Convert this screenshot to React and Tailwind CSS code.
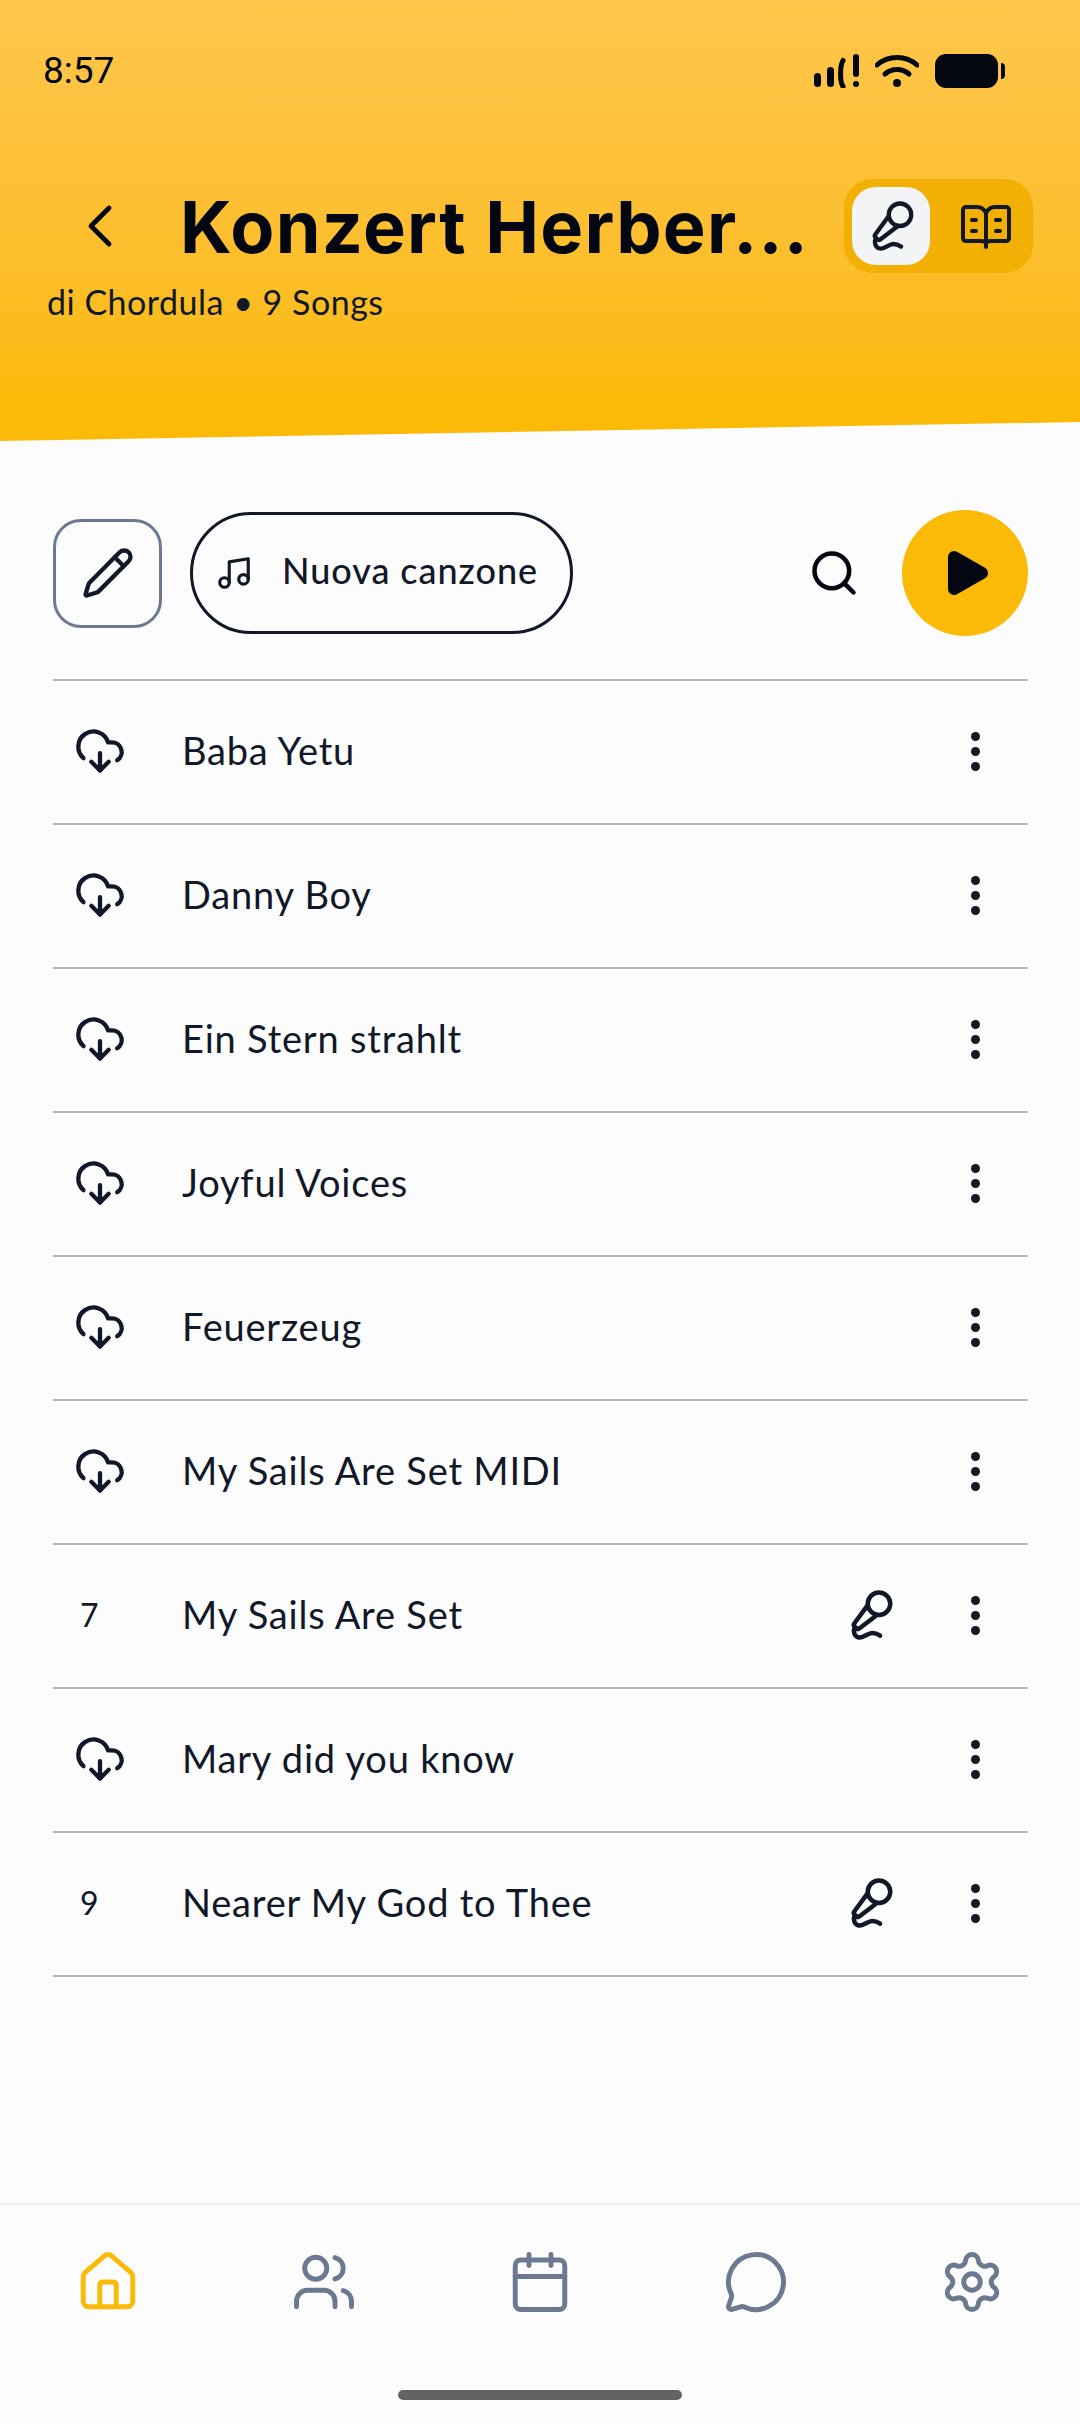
import { Calendar, ChevronLeft, CloudDownload, Home, MessageCircle, MicVocal, Music, Pencil, Search, Settings, Users } from 'lucide-react';

const songs = [
  { title: 'Baba Yetu' },
  { title: 'Danny Boy' },
  { title: 'Ein Stern strahlt' },
  { title: 'Joyful Voices' },
  { title: 'Feuerzeug' },
  { title: 'My Sails Are Set MIDI' },
  { title: 'My Sails Are Set', number: 7 },
  { title: 'Mary did you know' },
  { title: 'Nearer My God to Thee', number: 9 },
];

function StatusIcons() {
  return (
    <div className="flex items-center">
      {/* Signal with warning mark */}
      <svg width="45" height="34" viewBox="0 0 45 34" fill="#030712">
        <rect x="0" y="19" width="7" height="14" rx="3.5" />
        <rect x="13" y="13" width="7" height="20" rx="3.5" />
        <path d="M29 6.5c-3 5-3.500 21 0 26" fill="none" stroke="#030712" strokeWidth="5" strokeLinecap="round" />
        <rect x="39" y="0" width="6" height="23" rx="3" />
        <circle cx="42" cy="30" r="3" />
      </svg>
      {/* Wifi */}
      <svg className="ml-[16px]" width="44" height="34" viewBox="0 0 44 34" fill="none" stroke="#030712" strokeWidth="5" strokeLinecap="round">
        <path d="M2 11c11-10 29-10 40 0" />
        <path d="M10 20c7-6 17-6 24 0" />
        <circle cx="22" cy="29" r="4" fill="#030712" stroke="none" />
      </svg>
      {/* Battery */}
      <div className="ml-[16px] h-[34px] w-[63px] rounded-[11px] bg-[#030712]" />
      <div className="ml-[3px] h-[16px] w-[4px] rounded-r-sm bg-[#030712]" />
    </div>
  );
}

function BookIcon() {
  return (
    <svg width="50" height="46" viewBox="0 0 50 46" fill="none" stroke="#111827" strokeWidth="4" strokeLinecap="round" strokeLinejoin="round">
      <path d="M25 10c-2-4-5-6-9-6H5c-1.500 0-3 1-3 3v28c0 1.500 1 3 3 3h15c3 0 5 1 5 2 0-1 2-2 5-2h15c2 0 3-1.500 3-3V7c0-2-1.500-3-3-3H34c-4 0-7 2-9 6z" />
      <path d="M25 10v34" />
      <path d="M11 17h4M11 28h4M35 17h4M35 28h4" />
    </svg>
  );
}

export default function App() {
  return (
    <div className="flex h-[2424px] w-[1080px] flex-col overflow-hidden bg-[#fcfcfd] font-['Lato',sans-serif] text-[#111827]">
      {/* Header */}
      <header className="h-[441px] shrink-0 bg-gradient-to-b from-[#ffc64b] to-[#fbba07] to-90% [clip-path:polygon(0_0,100%_0,100%_422px,0_441px)]">
        <div className="flex items-center justify-between pl-[43px] pr-[75px] pt-[54px]">
          <span className="font-['Roboto',sans-serif] text-[37px] leading-[34px] text-[#030712]">8:57</span>
          <StatusIcons />
        </div>
        <div className="mt-[91px] flex h-[94px] items-center pr-[47px]">
          <ChevronLeft size={72} strokeWidth={1.6} className="ml-[64px] shrink-0 text-[#030712]" />
          <h1 className="ml-[44px] flex-1 whitespace-nowrap pt-[2px] font-['Inter',sans-serif] text-[72px] font-bold leading-none tracking-[1.3px] text-[#030712]">Konzert Herber...</h1>
          <div className="flex h-[94px] w-[189px] shrink-0 items-center rounded-[28px] bg-[#f2b005] pl-[8px]">
            <div className="flex h-[78px] w-[78px] items-center justify-center rounded-[24px] bg-[#f2f4f5]">
              <MicVocal size={54} strokeWidth={1.9} />
            </div>
            <div className="ml-[31px]">
              <BookIcon />
            </div>
          </div>
        </div>
        <p className="ml-[47px] mt-[7px] text-[34px] leading-[44px] tracking-[0.5px] text-[#111827]">di Chordula • 9 Songs</p>
      </header>

      {/* Toolbar */}
      <div className="flex items-center pb-[43px] pl-[53px] pr-[52px] pt-[69px]">
        <button className="flex h-[109px] w-[109px] items-center justify-center rounded-[28px] border-[3px] border-[#6b7a90]">
          <Pencil size={54} strokeWidth={1.9} />
        </button>
        <button className="ml-[28px] flex h-[122px] w-[383px] items-center rounded-full border-[3px] border-[#111827] pl-[22px]">
          <Music size={38} strokeWidth={2} />
          <span className="ml-[29px] pb-[6px] text-[36px] font-medium tracking-[0.95px]">Nuova canzone</span>
        </button>
        <Search size={52} strokeWidth={2.1} className="ml-auto text-[#030712]" />
        <button className="ml-[42px] flex h-[126px] w-[126px] items-center justify-center rounded-full bg-[#fbba07]">
          <svg width="40" height="44" viewBox="0 0 40 44" fill="#030712" stroke="#030712" strokeWidth="12" strokeLinejoin="round" className="ml-[5px]">
            <path d="M6 6l28 16L6 38z" />
          </svg>
        </button>
      </div>

      {/* Song list */}
      <ul className="ml-[53px] mr-[52px] border-t-2 border-[#aeb8c4]">
        {songs.map((song) => (
          <li key={song.title} className="flex h-[144px] items-center border-b-2 border-[#aeb8c4] pb-[2px]">
            <div className="w-[129px] shrink-0 pl-[21px]">
              {song.number ? (
                <span className="ml-[6px] text-[32px]">{song.number}</span>
              ) : (
                <CloudDownload size={52} strokeWidth={2} />
              )}
            </div>
            <span className="flex-1 pb-[2px] text-[38px] tracking-[0.8px]">{song.title}</span>
            {song.number && <MicVocal size={54} strokeWidth={2} className="mr-[74px]" />}
            <div className="mr-[48px] flex flex-col gap-[6px]">
              <span className="h-[9px] w-[9px] rounded-full bg-[#111827]" />
              <span className="h-[9px] w-[9px] rounded-full bg-[#111827]" />
              <span className="h-[9px] w-[9px] rounded-full bg-[#111827]" />
            </div>
          </li>
        ))}
      </ul>

      {/* Bottom navigation */}
      <nav className="mt-auto h-[221px] shrink-0 border-t-2 border-[#f1f1f2]">
        <div className="grid grid-cols-5 justify-items-center pt-[44px] text-[#6b7a90]">
          <Home size={66} strokeWidth={1.8} className="text-[#fbba07]" />
          <Users size={66} strokeWidth={1.8} />
          <Calendar size={66} strokeWidth={1.8} />
          <MessageCircle size={66} strokeWidth={1.8} />
          <Settings size={66} strokeWidth={1.8} />
        </div>
        <div className="mx-auto mt-[75px] h-[10px] w-[284px] rounded-full bg-[#636366]" />
      </nav>
    </div>
  );
}
